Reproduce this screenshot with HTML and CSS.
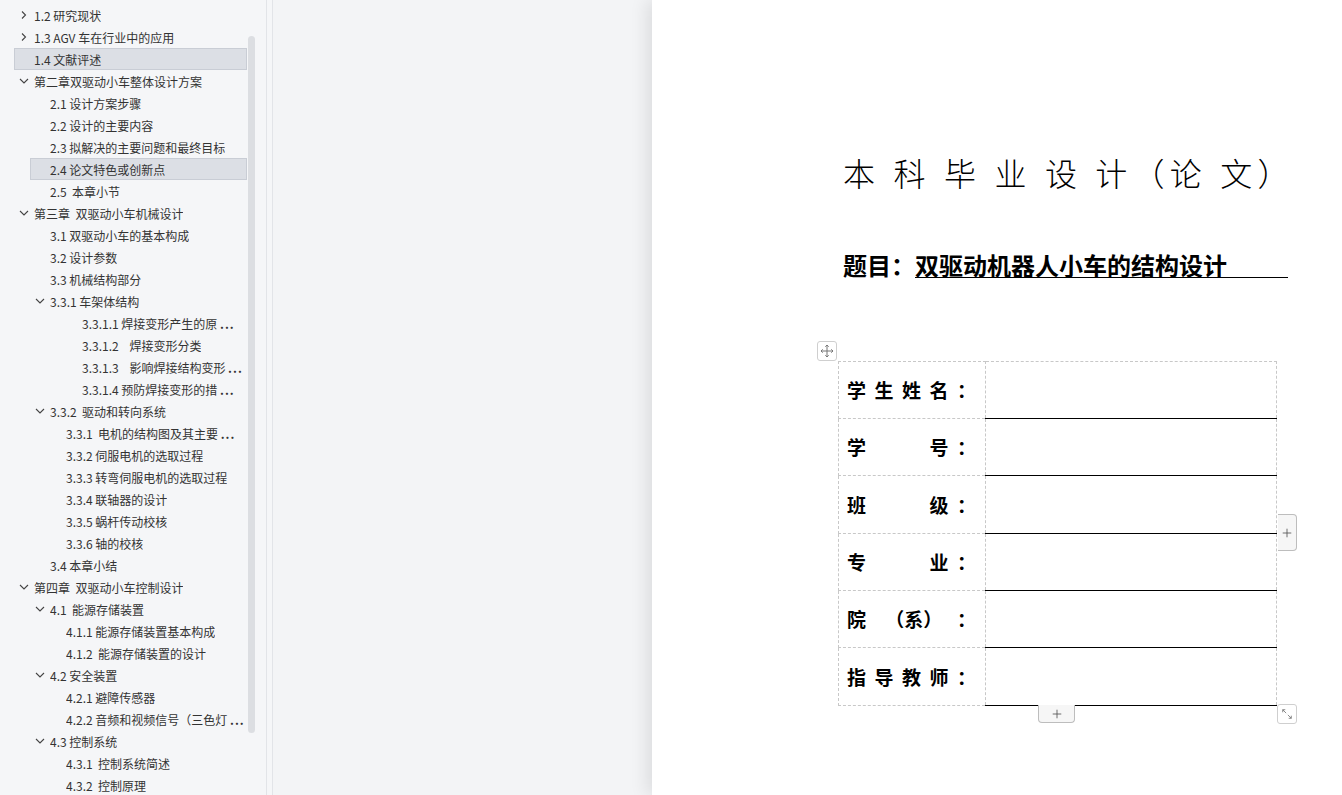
FILE: index.html
```html
<!DOCTYPE html>
<html lang="zh-CN">

<head>
  <meta charset="UTF-8">
  <meta name="viewport" content="width=device-width, initial-scale=1.0">
  <title>本科毕业设计（论文）</title>
  <link rel="stylesheet" href="styles.css">
</head>

<body>

  <div class="app">
    <!-- Outline panel -->
    <aside class="toc">
      <ul class="toc-list">
        <li class="toc-item lv0"><span class="caret"><svg viewBox="0 0 10 10"><path d="M3 1.5 L6.5 5 L3 8.5" /></svg></span><span class="label">1.2 研究现状</span></li>
        <li class="toc-item lv0"><span class="caret"><svg viewBox="0 0 10 10"><path d="M3 1.5 L6.5 5 L3 8.5" /></svg></span><span class="label">1.3 AGV 车在行业中的应用</span></li>
        <li class="toc-item lv0 selected"><span class="caret"></span><span class="label">1.4 文献评述</span></li>
        <li class="toc-item lv0"><span class="caret"><svg viewBox="0 0 10 10"><path d="M1 3 L5 7 L9 3" /></svg></span><span class="label">第二章双驱动小车整体设计方案</span></li>
        <li class="toc-item lv1"><span class="caret"></span><span class="label">2.1 设计方案步骤</span></li>
        <li class="toc-item lv1"><span class="caret"></span><span class="label">2.2 设计的主要内容</span></li>
        <li class="toc-item lv1"><span class="caret"></span><span class="label">2.3 拟解决的主要问题和最终目标</span></li>
        <li class="toc-item lv1 selected"><span class="caret"></span><span class="label">2.4 论文特色或创新点</span></li>
        <li class="toc-item lv1"><span class="caret"></span><span class="label">2.5  本章小节</span></li>
        <li class="toc-item lv0"><span class="caret"><svg viewBox="0 0 10 10"><path d="M1 3 L5 7 L9 3" /></svg></span><span class="label">第三章  双驱动小车机械设计</span></li>
        <li class="toc-item lv1"><span class="caret"></span><span class="label">3.1 双驱动小车的基本构成</span></li>
        <li class="toc-item lv1"><span class="caret"></span><span class="label">3.2 设计参数</span></li>
        <li class="toc-item lv1"><span class="caret"></span><span class="label">3.3 机械结构部分</span></li>
        <li class="toc-item lv1"><span class="caret"><svg viewBox="0 0 10 10"><path d="M1 3 L5 7 L9 3" /></svg></span><span class="label">3.3.1 车架体结构</span></li>
        <li class="toc-item lv3"><span class="caret"></span><span class="label">3.3.1.1 焊接变形产生的原 <b class="more">...</b></span></li>
        <li class="toc-item lv3"><span class="caret"></span><span class="label">3.3.1.2    焊接变形分类</span></li>
        <li class="toc-item lv3"><span class="caret"></span><span class="label">3.3.1.3    影响焊接结构变形 <b class="more">...</b></span></li>
        <li class="toc-item lv3"><span class="caret"></span><span class="label">3.3.1.4 预防焊接变形的措 <b class="more">...</b></span></li>
        <li class="toc-item lv1"><span class="caret"><svg viewBox="0 0 10 10"><path d="M1 3 L5 7 L9 3" /></svg></span><span class="label">3.3.2  驱动和转向系统</span></li>
        <li class="toc-item lv2"><span class="caret"></span><span class="label">3.3.1  电机的结构图及其主要 <b class="more">...</b></span></li>
        <li class="toc-item lv2"><span class="caret"></span><span class="label">3.3.2 伺服电机的选取过程</span></li>
        <li class="toc-item lv2"><span class="caret"></span><span class="label">3.3.3 转弯伺服电机的选取过程</span></li>
        <li class="toc-item lv2"><span class="caret"></span><span class="label">3.3.4 联轴器的设计</span></li>
        <li class="toc-item lv2"><span class="caret"></span><span class="label">3.3.5 蜗杆传动校核</span></li>
        <li class="toc-item lv2"><span class="caret"></span><span class="label">3.3.6 轴的校核</span></li>
        <li class="toc-item lv1"><span class="caret"></span><span class="label">3.4 本章小结</span></li>
        <li class="toc-item lv0"><span class="caret"><svg viewBox="0 0 10 10"><path d="M1 3 L5 7 L9 3" /></svg></span><span class="label">第四章  双驱动小车控制设计</span></li>
        <li class="toc-item lv1"><span class="caret"><svg viewBox="0 0 10 10"><path d="M1 3 L5 7 L9 3" /></svg></span><span class="label">4.1  能源存储装置</span></li>
        <li class="toc-item lv2"><span class="caret"></span><span class="label">4.1.1 能源存储装置基本构成</span></li>
        <li class="toc-item lv2"><span class="caret"></span><span class="label">4.1.2  能源存储装置的设计</span></li>
        <li class="toc-item lv1"><span class="caret"><svg viewBox="0 0 10 10"><path d="M1 3 L5 7 L9 3" /></svg></span><span class="label">4.2 安全装置</span></li>
        <li class="toc-item lv2"><span class="caret"></span><span class="label">4.2.1 避障传感器</span></li>
        <li class="toc-item lv2"><span class="caret"></span><span class="label">4.2.2 音频和视频信号（三色灯 <b class="more">...</b></span></li>
        <li class="toc-item lv1"><span class="caret"><svg viewBox="0 0 10 10"><path d="M1 3 L5 7 L9 3" /></svg></span><span class="label">4.3 控制系统</span></li>
        <li class="toc-item lv2"><span class="caret"></span><span class="label">4.3.1  控制系统简述</span></li>
        <li class="toc-item lv2"><span class="caret"></span><span class="label">4.3.2  控制原理</span></li>
      </ul>
      <div class="scroll-thumb"></div>
    </aside>

    <div class="splitter"></div>

    <!-- Document -->
    <main class="viewer">
      <div class="page">
        <h1 class="doc-title">本 科 毕 业 设 计（论 文）</h1>
        <p class="doc-subject">题目：<span class="subject-line">双驱动机器人小车的结构设计</span></p>

        <div class="cover-table-wrap">
          <button class="tbl-btn tbl-move" type="button">
            <svg viewBox="0 0 14 14">
              <path d="M7 1 V13 M1 7 H13" />
              <path d="M5.3 2.7 L7 1 L8.7 2.7 M5.3 11.3 L7 13 L8.7 11.3 M2.7 5.3 L1 7 L2.7 8.7 M11.3 5.3 L13 7 L11.3 8.7" />
            </svg>
          </button>

          <table class="cover-table">
            <tr class="r57">
              <th><span class="lbl"><i>学</i><i>生</i><i>姓</i><i>名</i><i>：</i></span></th>
              <td></td>
            </tr>
            <tr class="r57">
              <th><span class="lbl"><i>学</i><i></i><i></i><i>号</i><i>：</i></span></th>
              <td></td>
            </tr>
            <tr class="r58">
              <th><span class="lbl"><i>班</i><i></i><i></i><i>级</i><i>：</i></span></th>
              <td></td>
            </tr>
            <tr class="r57">
              <th><span class="lbl"><i>专</i><i></i><i></i><i>业</i><i>：</i></span></th>
              <td></td>
            </tr>
            <tr class="r57">
              <th><span class="lbl"><i>院</i><i class="wide">（系）</i><i>：</i></span></th>
              <td></td>
            </tr>
            <tr class="r58">
              <th><span class="lbl"><i>指</i><i>导</i><i>教</i><i>师</i><i>：</i></span></th>
              <td></td>
            </tr>
          </table>

          <button class="tbl-btn tbl-add-col" type="button">
            <svg viewBox="0 0 14 14"><path d="M7 2 V12 M2 7 H12" /></svg>
          </button>
          <button class="tbl-btn tbl-add-row" type="button">
            <svg viewBox="0 0 14 14"><path d="M7 2 V12 M2 7 H12" /></svg>
          </button>
          <button class="tbl-btn tbl-resize" type="button">
            <svg viewBox="0 0 14 14">
              <path d="M2 2 L6 6 M2 2 H5 M2 2 V5" />
              <path d="M12 12 L8 8 M12 12 H9 M12 12 V9" />
            </svg>
          </button>
        </div>
      </div>
    </main>
  </div>

</body>

</html>
```

FILE: styles.css
```css
* {
  box-sizing: border-box;
}

body {
  margin: 0;
  height: 795px;
  overflow: hidden;
  font-family: "Noto Sans CJK SC", "Noto Sans", sans-serif;
  background-color: #f3f4f6;
}

.app {
  display: flex;
  height: 795px;
}

/* Outline panel */
.toc {
  position: relative;
  width: 267px;
  flex: none;
  background-color: #f5f6f8;
  border-right: 1px solid #e2e4e8;
  padding-top: 4px;
}

.toc-list {
  list-style: none;
  margin: 0;
  padding: 0;
  width: 247px;
}

.toc-item {
  display: flex;
  align-items: center;
  height: 22px;
  border: 1px solid transparent;
  font-size: 12px;
  color: #333;
  white-space: pre;
}

.toc-item.lv0 { margin-left: 14px; }
.toc-item.lv1 { margin-left: 30px; }
.toc-item.lv2 { margin-left: 46px; }
.toc-item.lv3 { margin-left: 62px; }

.toc-item.selected {
  background-color: #dcdfe5;
  border-color: #c9cdd5;
}

.caret {
  width: 18px;
  flex: none;
  display: flex;
  justify-content: center;
  margin-right: 1px;
}

.caret svg {
  width: 10px;
  height: 10px;
  fill: none;
  stroke: #444;
  stroke-width: 1.1;
}

.label {
  overflow: hidden;
}

.more {
  font-weight: bold;
  letter-spacing: 1px;
}

.scroll-thumb {
  position: absolute;
  left: 248px;
  top: 36px;
  width: 7px;
  height: 697px;
  border-radius: 4px;
  background-color: #dcdee2;
}

.splitter {
  width: 6px;
  flex: none;
  background-color: #f5f6f8;
  border-right: 1px solid #e2e4e8;
}

/* Document area */
.viewer {
  flex: 1;
  overflow: hidden;
  padding-left: 379px;
  background-color: #f3f4f6;
}

.page {
  width: 800px;
  height: 795px;
  background-color: #fff;
  box-shadow: -6px 0 16px rgba(0, 0, 0, 0.09);
  padding: 156px 0 0 186px;
}

.doc-title {
  margin: 0 0 0 5px;
  font-size: 32px;
  line-height: 32px;
  font-weight: 300;
  letter-spacing: 5.2px;
  word-spacing: 1px;
  color: #000;
  white-space: pre;
}

.doc-subject {
  margin: 65px 0 0 5px;
  font-size: 24px;
  line-height: 24px;
  font-weight: bold;
  color: #000;
}

.subject-line {
  display: inline-block;
  width: 373px;
  border-bottom: 1.5px solid #000;
}

.cover-table-wrap {
  position: relative;
  width: 439px;
  margin-top: 83px;
}

.cover-table {
  border-collapse: collapse;
  width: 439px;
}

.cover-table tr.r57 { height: 57px; }
.cover-table tr.r58 { height: 58px; }

.cover-table th {
  width: 146px;
  padding: 0 0 0 8px;
  border: 1px dashed #c8c8c8;
  text-align: left;
}

.cover-table td {
  padding: 0;
  border-top: 1px dashed #c8c8c8;
  border-right: 1px dashed #c8c8c8;
  border-bottom: 1.5px solid #000;
}

.lbl {
  display: grid;
  grid-template-columns: repeat(5, 27.5px);
  align-items: center;
  font-size: 19px;
  font-weight: bold;
  color: #000;
  line-height: 24px;
}

.lbl i {
  font-style: normal;
}

.lbl i.wide {
  grid-column: span 3;
  text-align: center;
  margin-left: -4px;
}

/* Table editing handles */
.tbl-btn {
  position: absolute;
  padding: 0;
  display: flex;
  align-items: center;
  justify-content: center;
  background-color: #fff;
  border: 1px solid #cfcfcf;
  cursor: pointer;
}

.tbl-btn svg {
  width: 14px;
  height: 14px;
  fill: none;
  stroke: #777;
  stroke-width: 1;
}

.tbl-move {
  left: -21px;
  top: -20px;
  width: 20px;
  height: 20px;
  border-radius: 3px;
}

.tbl-add-col,
.tbl-add-row {
  background-color: #f6f6f6;
  border-color: #bdbdbd;
}

.tbl-add-col svg,
.tbl-add-row svg {
  width: 12px;
  height: 12px;
  stroke: #555;
}

.tbl-add-col {
  left: 440px;
  top: 153px;
  width: 19px;
  height: 37px;
  border-left: none;
  border-radius: 0 4px 4px 0;
}

.tbl-add-row {
  left: 200px;
  top: 344px;
  width: 37px;
  height: 18px;
  border-top: none;
  border-radius: 0 0 4px 4px;
}

.tbl-resize {
  left: 439px;
  top: 343px;
  width: 20px;
  height: 20px;
  border-radius: 3px;
}

.tbl-resize svg {
  width: 12px;
  height: 12px;
}
```
